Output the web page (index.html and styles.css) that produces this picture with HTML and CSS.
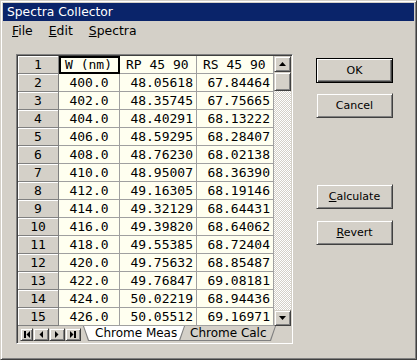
FILE: index.html
```html
<!DOCTYPE html>
<html lang="en">
<head>
    <meta charset="UTF-8">
    <title>Spectra Collector</title>
    <link rel="stylesheet" href="styles.css">
</head>
<body>
    <div class="window">
        <div class="titlebar">Spectra Collector</div>
        <div class="menubar">
            <span class="menu-item"><u>F</u>ile</span>
            <span class="menu-item"><u>E</u>dit</span>
            <span class="menu-item"><u>S</u>pectra</span>
        </div>
        <div class="client">
            <div class="grid-frame">
                <div class="grid-body">
                    <div class="sheet">
                        <div class="row">
                            <div class="cell rowhead">1</div>
                            <div class="cell head selected">W (nm)</div>
                            <div class="cell head">RP 45 90</div>
                            <div class="cell head">RS 45 90</div>
                        </div>
                        <div class="row"><div class="cell rowhead">2</div><div class="cell wl">400.0</div><div class="cell num">48.05618</div><div class="cell num">67.84464</div></div>
                        <div class="row"><div class="cell rowhead">3</div><div class="cell wl">402.0</div><div class="cell num">48.35745</div><div class="cell num">67.75665</div></div>
                        <div class="row"><div class="cell rowhead">4</div><div class="cell wl">404.0</div><div class="cell num">48.40291</div><div class="cell num">68.13222</div></div>
                        <div class="row"><div class="cell rowhead">5</div><div class="cell wl">406.0</div><div class="cell num">48.59295</div><div class="cell num">68.28407</div></div>
                        <div class="row"><div class="cell rowhead">6</div><div class="cell wl">408.0</div><div class="cell num">48.76230</div><div class="cell num">68.02138</div></div>
                        <div class="row"><div class="cell rowhead">7</div><div class="cell wl">410.0</div><div class="cell num">48.95007</div><div class="cell num">68.36390</div></div>
                        <div class="row"><div class="cell rowhead">8</div><div class="cell wl">412.0</div><div class="cell num">49.16305</div><div class="cell num">68.19146</div></div>
                        <div class="row"><div class="cell rowhead">9</div><div class="cell wl">414.0</div><div class="cell num">49.32129</div><div class="cell num">68.64431</div></div>
                        <div class="row"><div class="cell rowhead">10</div><div class="cell wl">416.0</div><div class="cell num">49.39820</div><div class="cell num">68.64062</div></div>
                        <div class="row"><div class="cell rowhead">11</div><div class="cell wl">418.0</div><div class="cell num">49.55385</div><div class="cell num">68.72404</div></div>
                        <div class="row"><div class="cell rowhead">12</div><div class="cell wl">420.0</div><div class="cell num">49.75632</div><div class="cell num">68.85487</div></div>
                        <div class="row"><div class="cell rowhead">13</div><div class="cell wl">422.0</div><div class="cell num">49.76847</div><div class="cell num">69.08181</div></div>
                        <div class="row"><div class="cell rowhead">14</div><div class="cell wl">424.0</div><div class="cell num">50.02219</div><div class="cell num">68.94436</div></div>
                        <div class="row"><div class="cell rowhead">15</div><div class="cell wl">426.0</div><div class="cell num">50.05512</div><div class="cell num">69.16971</div></div>
                    </div>
                    <div class="vscroll">
                        <div class="raised sb-btn">
                            <svg width="7" height="4" viewBox="0 0 7 4"><polygon points="3.5,0 7,4 0,4" fill="#000"/></svg>
                        </div>
                        <div class="raised thumb"></div>
                        <div class="track"></div>
                        <div class="raised sb-btn">
                            <svg width="7" height="4" viewBox="0 0 7 4"><polygon points="0,0 7,0 3.5,4" fill="#000"/></svg>
                        </div>
                    </div>
                </div>
                <div class="tabstrip">
                    <div class="nav">
                        <div class="raised nav-btn first">
                            <svg width="6" height="7" viewBox="0 0 6 7"><rect x="0" y="0" width="2" height="7" fill="#000"/><polygon points="6,0 6,7 2.5,3.5" fill="#000"/></svg>
                        </div>
                        <div class="raised nav-btn">
                            <svg width="4" height="7" viewBox="0 0 4 7"><polygon points="4,0 4,7 0.5,3.5" fill="#000"/></svg>
                        </div>
                        <div class="raised nav-btn">
                            <svg width="4" height="7" viewBox="0 0 4 7"><polygon points="0,0 0,7 3.5,3.5" fill="#000"/></svg>
                        </div>
                        <div class="raised nav-btn">
                            <svg width="6" height="7" viewBox="0 0 6 7"><polygon points="0,0 0,7 3.5,3.5" fill="#000"/><rect x="4" y="0" width="2" height="7" fill="#000"/></svg>
                        </div>
                    </div>
                    <div class="tabs">
                        <div class="tab active"><div class="tab-face">Chrome Meas</div></div>
                        <div class="tab calc"><div class="tab-face">Chrome Calc</div></div>
                    </div>
                </div>
            </div>
            <div class="actions">
                <button class="raised btn default">OK</button>
                <button class="raised btn cancel">Cancel</button>
                <button class="raised btn calculate"><u>C</u>alculate</button>
                <button class="raised btn revert"><u>R</u>evert</button>
            </div>
        </div>
    </div>
</body>
</html>
```
FILE: styles.css
```css
body {
    margin: 0;
    background-color: #d4d0c8;
    font-family: "DejaVu Sans", Verdana, sans-serif;
    font-size: 12px;
    color: #000;
}
.window {
    width: 417px;
    height: 360px;
    box-sizing: border-box;
    border: 1px solid;
    border-color: #d4d0c8 #404040 #404040 #d4d0c8;
    box-shadow: inset 1px 1px #fff, inset -1px -1px #808080;
    padding: 2px;
    background-color: #d4d0c8;
    display: flex;
    flex-direction: column;
}
.titlebar {
    height: 18px;
    line-height: 18px;
    padding-left: 4px;
    font-size: 12.3px;
    background-color: #0a246a;
    color: #fff;
}
.menubar {
    height: 19px;
    line-height: 19px;
    display: flex;
    padding-left: 1px;
    font-size: 12.4px;
}
.menu-item {
    padding: 0 8px;
}
.client {
    display: flex;
    padding: 14px 0 0 13px;
}

/* generic 3d button look */
.raised {
    box-sizing: border-box;
    border: 1px solid;
    border-color: #d4d0c8 #404040 #404040 #d4d0c8;
    box-shadow: inset 1px 1px #fff, inset -1px -1px #808080;
    background-color: #d4d0c8;
}

.grid-frame {
    width: 277px;
    height: 290px;
    box-sizing: border-box;
    border: 1px solid;
    border-color: #808080 #fff #fff #808080;
    box-shadow: inset 1px 1px #404040, inset -1px -1px #d4d0c8;
    padding: 1px;
    display: flex;
    flex-direction: column;
}
.grid-body {
    display: flex;
    height: 270px;
}
.sheet {
    width: 256px;
    font-family: "DejaVu Sans Mono", monospace;
    font-size: 13px;
}
.row {
    display: grid;
    grid-template-columns: 41px 61px 77px 77px;
    height: 18px;
}
.cell {
    box-sizing: border-box;
    border-right: 1px solid #a0a0a0;
    border-bottom: 1px solid #a0a0a0;
    background-color: #fffff0;
    line-height: 17px;
    white-space: pre;
    overflow: hidden;
}
.rowhead {
    background-color: #d4d0c8;
    border-color: #808080;
    box-shadow: inset 1px 1px #fff;
    text-align: center;
}
.head {
    padding-left: 6px;
}
.selected {
    outline: 2px solid #000;
    outline-offset: -2px;
}
.wl {
    text-align: center;
}
.num {
    text-align: right;
    padding-right: 3px;
}

.vscroll {
    width: 17px;
    display: flex;
    flex-direction: column;
}
.sb-btn {
    height: 16px;
    display: flex;
    align-items: center;
    justify-content: center;
}
.thumb {
    height: 19px;
}
.track {
    flex: 1;
    background: repeating-conic-gradient(#fff 0 25%, #d4d0c8 0 50%) 0 0 / 2px 2px;
}

.tabstrip {
    height: 16px;
    display: flex;
    align-items: flex-start;
}
.nav {
    display: flex;
    margin: 2px 0 0 2px;
}
.nav-btn {
    width: 16px;
    height: 13px;
    display: flex;
    align-items: center;
    justify-content: center;
}
.nav-btn.first {
    width: 13px;
}
.tabs {
    display: flex;
    margin-left: 2px;
}
.tab {
    width: 102px;
    height: 15px;
    background-color: #808080;
    clip-path: polygon(0 0, 100% 0, calc(100% - 5px) 100%, 5px 100%);
}
.tab-face {
    height: 14px;
    line-height: 14px;
    padding-left: 12px;
    background-color: #d4d0c8;
    white-space: nowrap;
    clip-path: polygon(1px 0, calc(100% - 1px) 0, calc(100% - 6px) 100%, 6px 100%);
}
.tab.active {
    position: relative;
    z-index: 1;
}
.tab.active .tab-face {
    background-color: #fff;
}
.tab.calc {
    margin-left: -11px;
}
.tab.calc .tab-face {
    padding-left: 16px;
}

.actions {
    display: flex;
    flex-direction: column;
    margin-left: 23px;
    padding-top: 4px;
}
.btn {
    width: 77px;
    height: 25px;
    padding: 0;
    font-family: "DejaVu Sans", Verdana, sans-serif;
    font-size: 11px;
    color: #000;
}
.btn.default {
    border: 1px solid #000;
    box-shadow: inset 1px 1px #fff, inset -1px -1px #404040, inset -2px -2px #808080;
}
.btn.cancel {
    margin-top: 10px;
}
.btn.calculate {
    margin-top: 66px;
}
.btn.revert {
    margin-top: 11px;
}
```
